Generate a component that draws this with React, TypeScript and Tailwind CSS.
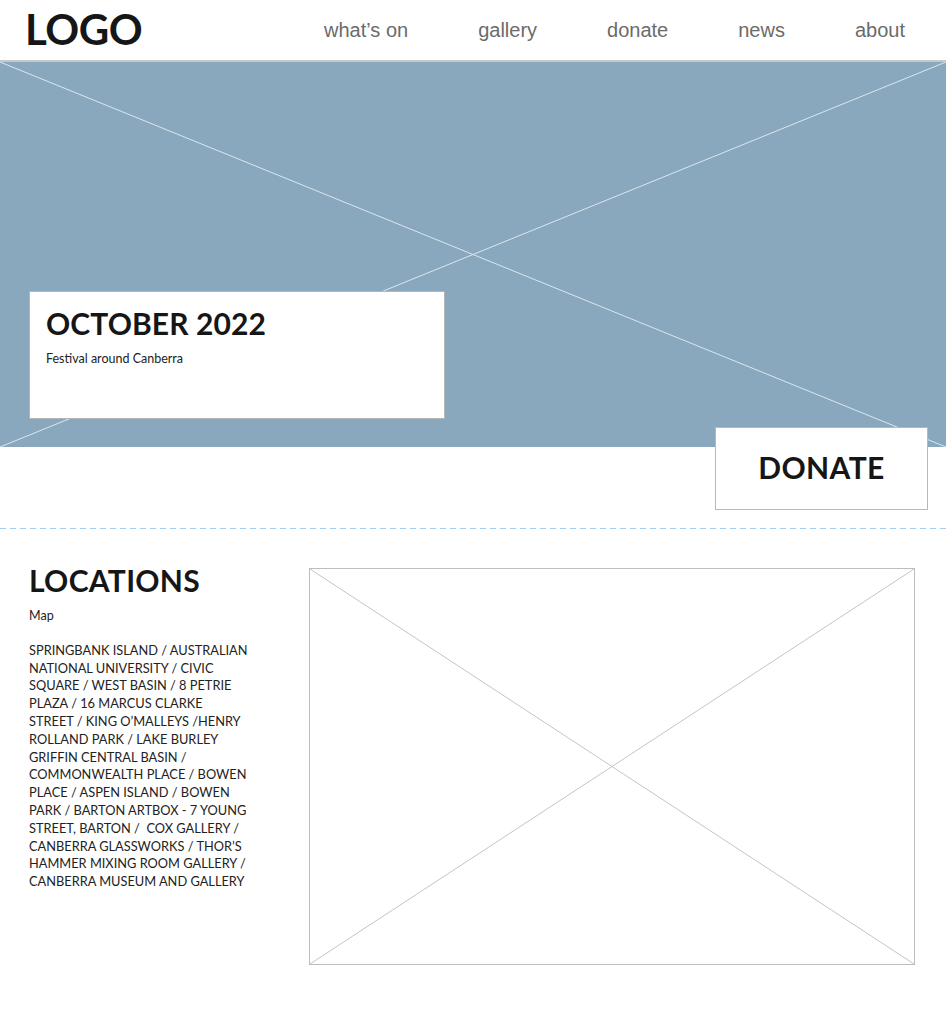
import React from 'react'

const navItems = ['what’s on', 'gallery', 'donate', 'news', 'about']

const locationLines = [
  'SPRINGBANK ISLAND / AUSTRALIAN',
  'NATIONAL UNIVERSITY / CIVIC',
  'SQUARE / WEST BASIN / 8 PETRIE',
  'PLAZA / 16 MARCUS CLARKE',
  'STREET / KING O’MALLEYS /HENRY',
  'ROLLAND PARK / LAKE BURLEY',
  'GRIFFIN CENTRAL BASIN /',
  'COMMONWEALTH PLACE / BOWEN',
  'PLACE / ASPEN ISLAND / BOWEN',
  'PARK / BARTON ARTBOX - 7 YOUNG',
  'STREET, BARTON /  COX GALLERY /',
  'CANBERRA GLASSWORKS / THOR’S',
  'HAMMER MIXING ROOM GALLERY /',
  'CANBERRA MUSEUM AND GALLERY',
]

function Cross({ color }: { color: string }) {
  return (
    <svg className="absolute inset-0 w-full h-full" viewBox="0 0 100 100" preserveAspectRatio="none">
      <line x1="0" y1="0" x2="100" y2="100" stroke={color} strokeWidth="1" vectorEffect="non-scaling-stroke" />
      <line x1="100" y1="0" x2="0" y2="100" stroke={color} strokeWidth="1" vectorEffect="non-scaling-stroke" />
    </svg>
  )
}

export default function App() {
  return (
    <div className="w-[946px] min-h-[1014px] bg-white font-['Lato',sans-serif] text-[#161616]">
      <header className="h-[62px] flex items-center justify-between pl-[25px] pr-[41px] border-b-2 border-[#c8c8c8]">
        <div className="text-[42px] font-bold tracking-[-0.5px] leading-none mt-[-3px]">LOGO</div>
        <nav className="flex gap-[70px] font-['Liberation_Sans',Arial,sans-serif] text-[20px] text-[#6b6b6b]">
          {navItems.map((item) => (
            <a key={item} href="#" className="leading-none">
              {item}
            </a>
          ))}
        </nav>
      </header>

      <section className="relative h-[385px] bg-[#8aa8bd] pt-[229px] pl-[29px]">
        <Cross color="#dbe6ee" />
        <div className="relative w-[416px] h-[128px] bg-white border border-[#b5b5b5] pl-[16px] pt-[13px]">
          <h1 className="text-[30px] font-bold leading-[36px] tracking-[0.1px]">OCTOBER 2022</h1>
          <p className="mt-[9px] text-[12.5px] text-[#222]">Festival around Canberra</p>
        </div>
      </section>

      <div className="flex justify-end pr-[18px] -mt-[20px]">
        <a
          href="#"
          className="relative w-[213px] h-[83px] bg-white border border-[#b8b8b8] flex items-center justify-center pb-[3px] text-[30px] font-bold tracking-[0.4px]"
        >
          DONATE
        </a>
      </div>

      <div className="mt-[18px] h-px bg-[repeating-linear-gradient(90deg,#a6cbf1_0px,#a6cbf1_6px,transparent_6px,transparent_10px)]" />

      <section className="flex pt-[35px] pl-[29px] pb-[49px]">
        <div className="w-[280px] shrink-0">
          <h2 className="text-[30px] font-bold leading-[32px] tracking-[0.3px]">LOCATIONS</h2>
          <p className="mt-[11px] text-[12.5px] text-[#222]">Map</p>
          <div className="mt-[16px] text-[12.8px] leading-[17.8px] text-[#222]">
            {locationLines.map((line) => (
              <div key={line} className="whitespace-pre">
                {line}
              </div>
            ))}
          </div>
        </div>
        <div className="relative w-[606px] h-[397px] border border-[#bdbdbd] mt-[4px]">
          <Cross color="#c4c4c4" />
        </div>
      </section>
    </div>
  )
}
